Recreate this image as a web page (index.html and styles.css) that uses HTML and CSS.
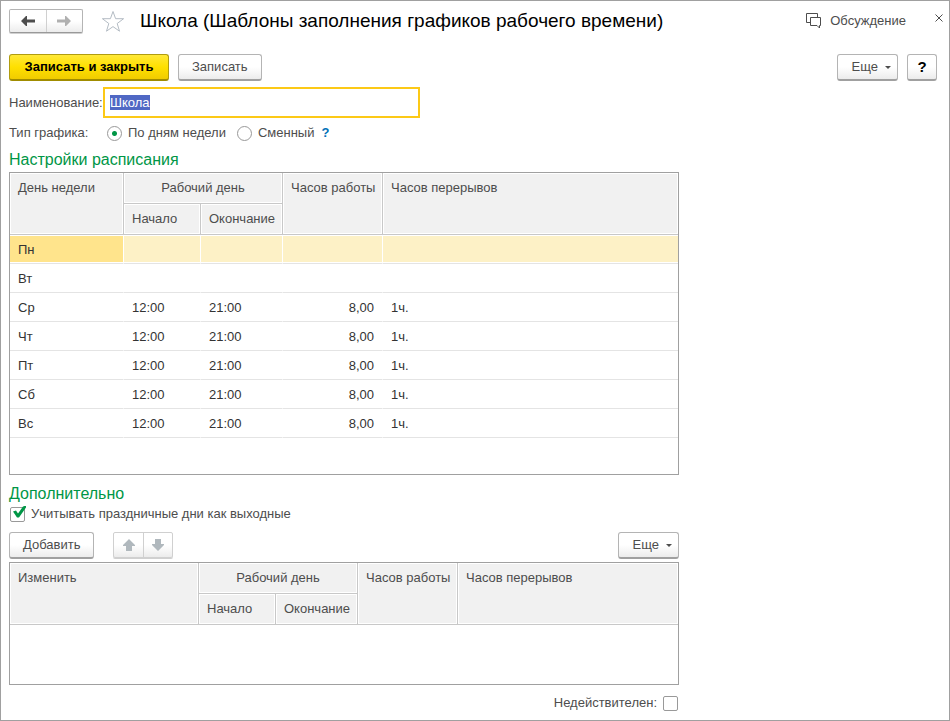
FILE: index.html
```
<!DOCTYPE html>
<html lang="ru">
<head>
    <meta charset="UTF-8">
    <meta name="viewport" content="width=device-width, initial-scale=1.0">
    <title>Школа (Шаблоны заполнения графиков рабочего времени)</title>
    <link rel="stylesheet" href="styles.css">
</head>
<body>
    <div class="window">
        <header class="title-bar">
            <div class="btn-group nav">
                <button type="button" aria-label="Назад">
                    <svg width="14" height="10" viewBox="0 0 14 10"><path d="M0 5l5-5h1v3.500H14v3H6V10H5z" fill="#4d4d4d"/></svg>
                </button>
                <button type="button" aria-label="Вперед">
                    <svg width="14" height="10" viewBox="0 0 14 10"><path d="M14 5L9 0H8v3.500H0v3h8V10h1z" fill="#b0b0b0"/></svg>
                </button>
            </div>
            <button type="button" class="star" aria-label="В избранное">
                <svg width="24" height="23" viewBox="0 0 24 23"><path d="M12 1.500l2.600 7.200h8l-6.400 4.800 2.300 7.700L12 16.600l-6.500 4.600 2.300-7.700L1.400 8.700h8z" fill="none" stroke="#b4bcc4"/></svg>
            </button>
            <h1>Школа (Шаблоны заполнения графиков рабочего времени)</h1>
            <a href="#" class="discuss">
                <svg width="16" height="16" viewBox="0 0 16 16"><path d="M4.500 9.500H.5v-9h11v4M4.500 4.500h10v8h-1v2.500l-2.500-2.500H4.500z" fill="none" stroke="#4d4d4d"/></svg>
                Обсуждение
            </a>
            <button type="button" class="close" aria-label="Закрыть">
                <svg width="8" height="8" viewBox="0 0 8 8"><path d="M.5.500l7 7M7.500.500l-7 7" stroke="#4d4d4d"/></svg>
            </button>
        </header>

        <form>
            <div class="commands">
                <button type="button" class="btn primary">Записать и закрыть</button>
                <button type="button" class="btn">Записать</button>
                <button type="button" class="btn more">Еще <span class="caret"></span></button>
                <button type="button" class="btn help">?</button>
            </div>

            <div class="field">
                <label for="name">Наименование:</label>
                <input type="text" id="name" value="Школа" autofocus>
            </div>

            <div class="field types">
                <span class="caption">Тип графика:</span>
                <input type="radio" name="type" id="byDays" checked>
                <label for="byDays">По дням недели</label>
                <input type="radio" name="type" id="shift">
                <label for="shift">Сменный</label>
                <a href="#" class="hint">?</a>
            </div>

            <div class="content">
                <h2>Настройки расписания</h2>
                <div class="grid schedule">
                    <table>
                        <colgroup>
                            <col class="col-day"><col class="col-start"><col class="col-end"><col class="col-hours"><col>
                        </colgroup>
                        <thead>
                            <tr>
                                <th rowspan="2">День недели</th>
                                <th colspan="2" class="center">Рабочий день</th>
                                <th rowspan="2">Часов работы</th>
                                <th rowspan="2">Часов перерывов</th>
                            </tr>
                            <tr>
                                <th>Начало</th>
                                <th>Окончание</th>
                            </tr>
                        </thead>
                        <tbody>
                            <tr class="selected"><td>Пн</td><td></td><td></td><td></td><td></td></tr>
                            <tr><td>Вт</td><td></td><td></td><td></td><td></td></tr>
                            <tr><td>Ср</td><td>12:00</td><td>21:00</td><td class="num">8,00</td><td>1ч.</td></tr>
                            <tr><td>Чт</td><td>12:00</td><td>21:00</td><td class="num">8,00</td><td>1ч.</td></tr>
                            <tr><td>Пт</td><td>12:00</td><td>21:00</td><td class="num">8,00</td><td>1ч.</td></tr>
                            <tr><td>Сб</td><td>12:00</td><td>21:00</td><td class="num">8,00</td><td>1ч.</td></tr>
                            <tr><td>Вс</td><td>12:00</td><td>21:00</td><td class="num">8,00</td><td>1ч.</td></tr>
                        </tbody>
                    </table>
                </div>

                <h2>Дополнительно</h2>
                <div class="check-row">
                    <input type="checkbox" id="holidays" checked>
                    <label for="holidays">Учитывать праздничные дни как выходные</label>
                </div>

                <div class="toolbar">
                    <button type="button" class="btn">Добавить</button>
                    <div class="btn-group move">
                        <button type="button" aria-label="Вверх">
                            <svg width="12" height="12" viewBox="0 0 12 12"><path d="M6 0l6 6v1H9v5H3V7H0V6z" fill="#b0b8bd"/></svg>
                        </button>
                        <button type="button" aria-label="Вниз">
                            <svg width="12" height="12" viewBox="0 0 12 12"><path d="M6 12l6-6V5H9V0H3v5H0v1z" fill="#b0b8bd"/></svg>
                        </button>
                    </div>
                    <button type="button" class="btn more">Еще <span class="caret"></span></button>
                </div>

                <div class="grid extra">
                    <table>
                        <colgroup>
                            <col class="col-change"><col class="col-start"><col class="col-end"><col class="col-hours"><col>
                        </colgroup>
                        <thead>
                            <tr>
                                <th rowspan="2">Изменить</th>
                                <th colspan="2" class="center">Рабочий день</th>
                                <th rowspan="2">Часов работы</th>
                                <th rowspan="2">Часов перерывов</th>
                            </tr>
                            <tr>
                                <th>Начало</th>
                                <th>Окончание</th>
                            </tr>
                        </thead>
                    </table>
                </div>

                <div class="check-row inactive">
                    <label for="inactive">Недействителен:</label>
                    <input type="checkbox" id="inactive">
                </div>
            </div>
        </form>
    </div>

    <script>
        const nameInput = document.getElementById('name');
        nameInput.focus();
        nameInput.select();
    </script>
</body>
</html>
```
FILE: styles.css
```
* {
    box-sizing: border-box;
}
body {
    margin: 0;
    background: #fff;
    color: #4d4d4d;
    font: 13px/16px "Liberation Sans", Arial, sans-serif;
}
.window {
    min-height: 100vh;
    padding: 7px 12px 8px 8px;
    border: 1px solid #a0a0a0;
}
button, input {
    font: inherit;
    color: inherit;
    margin: 0;
}
button {
    padding: 0;
    border: none;
    background: none;
}
svg {
    display: block;
}
a {
    color: inherit;
    text-decoration: none;
}

/* title bar */
.title-bar {
    display: flex;
    align-items: center;
    height: 26px;
}
.btn-group {
    display: flex;
    border: 1px solid #b4b4b4;
    border-bottom-color: #999;
    border-radius: 2px;
    background: linear-gradient(#fff 50%, #ececec);
    box-shadow: 0 1px 0 #d0d0d0;
}
.btn-group button {
    display: flex;
    align-items: center;
    justify-content: center;
}
.btn-group button + button {
    border-left: 1px solid #d0d0d0;
}
.nav {
    width: 74px;
    height: 24px;
}
.nav button {
    flex: 1;
}
.star {
    margin: 0 15px 0 18px;
}
h1 {
    margin: 0;
    color: #000;
    font-size: 19px;
    line-height: 26px;
    font-weight: normal;
    white-space: nowrap;
}
.discuss {
    display: flex;
    align-items: center;
    gap: 8px;
    margin-left: auto;
}
.close {
    margin: 0 -6px 6px 29px;
}

/* buttons */
.commands, .toolbar {
    display: flex;
}
.commands {
    margin: 20px 0 6px;
}
.btn {
    height: 27px;
    padding: 0 13px;
    border: 1px solid #b4b4b4;
    border-bottom: 2px solid #a0a0a0;
    border-radius: 3px;
    background: linear-gradient(#fff 50%, #ececec);
    white-space: nowrap;
}
.primary {
    width: 160px;
    margin-right: 9px;
    border-color: #b09c10;
    border-bottom-color: #a08c00;
    background: linear-gradient(#ffe838, #ffe000 50%, #f0cc00);
    color: #000;
    font-weight: bold;
}
.more {
    display: flex;
    align-items: center;
    justify-content: flex-end;
    gap: 7px;
    width: 61px;
    padding: 0 6px;
    margin-left: auto;
}
.caret {
    border: 3px solid transparent;
    border-top-color: #4d4d4d;
    border-bottom: none;
}
.help {
    width: 30px;
    padding: 0;
    margin-left: 9px;
    color: #000;
    font-size: 15px;
    font-weight: bold;
}

/* fields */
.field {
    display: flex;
    align-items: center;
}
.field label[for="name"], .caption {
    width: 94px;
    white-space: nowrap;
}
input[type="text"] {
    width: 317px;
    height: 31px;
    padding: 0 5px;
    border: 2px solid #fcc917;
    outline: none;
}
input::selection {
    background: #5068c4;
    color: #fff;
}
.types {
    margin: 7px 0 9px;
}
input[type="radio"], input[type="checkbox"] {
    flex: none;
    width: 15px;
    height: 15px;
    appearance: none;
    border: 1px solid #999;
    background: #fff;
}
input[type="radio"] {
    margin: 0 6px 0 4px;
    border-radius: 50%;
}
input[type="radio"]:checked {
    background: radial-gradient(circle, #009646 2px, #fff 3px);
}
.types label + input {
    margin-left: 11px;
}
.hint {
    margin-left: 7px;
    color: #0070b8;
    font-weight: bold;
}

h2 {
    margin: 0;
    color: #009646;
    font-size: 16px;
    line-height: 20px;
    font-weight: normal;
}
.content {
    max-width: 670px;
}

/* tables */
.grid {
    border: 1px solid #a0a0a0;
}
.schedule {
    min-height: 303px;
    margin: 2px 0 9px;
}
.extra {
    min-height: 123px;
}
table {
    width: 100%;
    table-layout: fixed;
    border-collapse: separate;
    border-spacing: 0;
}
.col-day {
    width: 114px;
}
.col-change {
    width: 189px;
}
.col-start {
    width: 77px;
}
.col-end {
    width: 82px;
}
.col-hours {
    width: 100px;
}
th {
    height: 31px;
    padding: 7px 8px;
    border-right: 1px solid #c8c8c8;
    border-bottom: 1px solid #c8c8c8;
    background: #f1f1f1;
    box-shadow: inset 0 0 0 1px #fff;
    font-weight: normal;
    text-align: left;
    vertical-align: top;
    white-space: nowrap;
}
th:last-child[rowspan] {
    border-right: none;
}
.center {
    text-align: center;
}
td {
    height: 29px;
    padding: 1px 8px 0;
    border-right: 1px solid transparent;
    border-bottom: 1px solid #e4e4e4;
    color: #333;
}
td:last-child {
    border-right: none;
}
.num {
    text-align: right;
}
.selected td {
    border-right-color: #fff;
    background: #fdf1c6;
    box-shadow: inset 0 1px 0 #fff, inset 0 -1px 0 #fff;
}
.selected td:first-child {
    background: #ffe48c;
}

.check-row {
    display: flex;
    align-items: center;
    gap: 6px;
    margin-top: 2px;
    padding-left: 1px;
}
input[type="checkbox"] {
    border-radius: 2px;
}
input[type="checkbox"]:checked {
    position: relative;
}
input[type="checkbox"]:checked::after {
    content: "";
    position: absolute;
    left: 1px;
    top: -2px;
    width: 14px;
    height: 13px;
    background: #009646;
    clip-path: polygon(1px 6px, 4px 5px, 6px 8px, 11px 1px, 14px 0, 14px 2px, 7px 12px, 5px 12px);
}
.toolbar {
    margin: 10px 0 3px;
}
.move {
    width: 60px;
    height: 26px;
    margin-left: 19px;
    border-color: #d0d0d0;
}
.move button {
    flex: 1;
}
.inactive {
    justify-content: flex-end;
    margin-top: 10px;
    padding-right: 1px;
}
```
